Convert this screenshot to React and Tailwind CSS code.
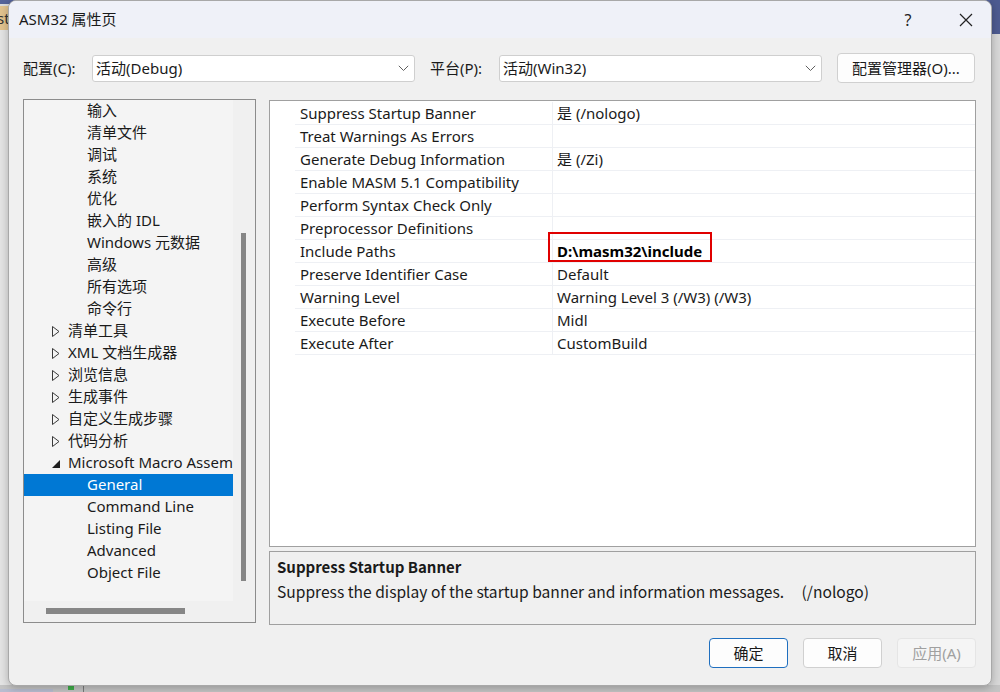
import React from "react";

const treeRows = [
  { t: "输入", k: "c" },
  { t: "清单文件", k: "c" },
  { t: "调试", k: "c" },
  { t: "系统", k: "c" },
  { t: "优化", k: "c" },
  { t: "嵌入的 IDL", k: "c" },
  { t: "Windows 元数据", k: "c" },
  { t: "高级", k: "c" },
  { t: "所有选项", k: "c" },
  { t: "命令行", k: "c" },
  { t: "清单工具", k: "p" },
  { t: "XML 文档生成器", k: "p" },
  { t: "浏览信息", k: "p" },
  { t: "生成事件", k: "p" },
  { t: "自定义生成步骤", k: "p" },
  { t: "代码分析", k: "p" },
  { t: "Microsoft Macro Assembler", k: "e" },
  { t: "General", k: "c", sel: true },
  { t: "Command Line", k: "c" },
  { t: "Listing File", k: "c" },
  { t: "Advanced", k: "c" },
  { t: "Object File", k: "c" },
];

const props = [
  ["Suppress Startup Banner", "是 (/nologo)"],
  ["Treat Warnings As Errors", ""],
  ["Generate Debug Information", "是 (/Zi)"],
  ["Enable MASM 5.1 Compatibility", ""],
  ["Perform Syntax Check Only", ""],
  ["Preprocessor Definitions", ""],
  ["Include Paths", "D:\\masm32\\include", true],
  ["Preserve Identifier Case", "Default"],
  ["Warning Level", "Warning Level 3 (/W3) (/W3)"],
  ["Execute Before", "Midl"],
  ["Execute After", "CustomBuild"],
];

function Chevron() {
  return (
    <svg width="11" height="7" viewBox="0 0 11 7" className="shrink-0">
      <path d="M0.8 0.8 L5.5 5.5 L10.2 0.8" fill="none" stroke="#606060" strokeWidth="1" />
    </svg>
  );
}

function Select({ value, w }) {
  return (
    <div className={`flex items-center justify-between h-[27px] bg-white border border-[#cfcfcf] rounded-[3px] pl-[3px] pr-[5px] ${w}`}>
      <span>{value}</span>
      <Chevron />
    </div>
  );
}

function TreeRow({ r }) {
  return (
    <div
      className={`relative h-[22px] flex items-center whitespace-nowrap ${r.sel ? "bg-[#0078d4] text-white" : "text-[#1a1a1a]"}`}
    >
      {r.k === "p" && (
        <svg width="8" height="11" viewBox="0 0 8 11" className="absolute left-[28px] top-[6px]">
          <path d="M0.5 0.5 L7 5.5 L0.5 10.5 Z" fill="none" stroke="#3a3a3a" strokeWidth="1" />
        </svg>
      )}
      {r.k === "e" && (
        <svg width="8" height="8" viewBox="0 0 8 8" className="absolute left-[28px] top-[8px]">
          <path d="M8 0 L8 8 L0 8 Z" fill="#1e1e1e" />
        </svg>
      )}
      <span className={`-mt-[1px] ${r.k === "c" ? "pl-[63px]" : "pl-[44px]"}`}>{r.t}</span>
    </div>
  );
}

export default function App() {
  return (
    <div className="relative w-[1000px] h-[692px] overflow-hidden bg-[#dcdcdc] font-['Noto_Sans','Noto_Sans_CJK_SC',sans-serif] text-[15px] text-[#1a1a1a]">
      {/* background desktop bits */}
      <div className="absolute left-0 top-0 w-[1000px] h-[4px] bg-[#56649a]" />
      <div className="absolute left-0 top-[6px] w-[10px] h-[24px] bg-[#e2c38e] overflow-hidden">
        <span className="absolute left-[-3px] top-0 text-[15px] leading-[24px] text-[#333]">st</span>
      </div>
      <div className="absolute left-0 top-[30px] w-[10px] h-[660px] bg-[#e4e4e4]" />
      <div className="absolute right-0 top-0 w-[10px] h-[34px] bg-[#4d5b91]" />
      <div className="absolute right-0 top-[34px] w-[10px] h-[660px] bg-[#d8d8d8]" />
      <div className="absolute left-0 top-[685px] w-[1000px] h-[7px] bg-[#c4c4c4]" />
      <div className="absolute left-0 top-[689px] w-[53px] h-[3px] bg-[#b8bdd0]" />
      <div className="absolute left-[68px] top-[683px] w-[6px] h-[7px] bg-[#3fae49]" />
      <div className="absolute left-[83px] top-[684px] w-[1px] h-[8px] bg-[#7a7a7a]" />

      {/* dialog */}
      <div className="absolute left-[8px] top-0 w-[984px] h-[686px] rounded-[8px] border border-[#a8a8a8] bg-[#f0f0f0] overflow-hidden flex flex-col shadow-[0_2px_8px_rgba(0,0,0,0.25)]">
        {/* title bar */}
        <div className="h-[37px] bg-[#eff1f8] flex items-center pl-[10px] shrink-0">
          <span className="text-[15px] text-[#1a1a1a]">ASM32 属性页</span>
          <div className="ml-auto flex items-center">
            <span className="w-[46px] text-center text-[16px] text-[#222] mr-[12px]">?</span>
            <div className="w-[46px] flex justify-center mr-[2px]">
              <svg width="14" height="14" viewBox="0 0 14 14">
                <path d="M1 1 L13 13 M13 1 L1 13" stroke="#222" strokeWidth="1.2" fill="none" />
              </svg>
            </div>
          </div>
        </div>

        {/* body */}
        <div className="flex-1 flex flex-col pl-[14px] pr-[15px]">
          {/* config row */}
          <div className="flex items-center mt-[15px] h-[30px]">
            <span className="w-[69px]">配置(C):</span>
            <Select value="活动(Debug)" w="w-[323px]" />
            <span className="ml-[15px] w-[69px]">平台(P):</span>
            <Select value="活动(Win32)" w="w-[323px]" />
            <div className="ml-[15px] w-[138px] h-[30px] flex items-center justify-center bg-[#fdfdfd] border border-[#d0d0d0] rounded-[4px]">
              配置管理器(O)...
            </div>
          </div>

          {/* main */}
          <div className="flex mt-[16px] gap-[13px]">
            {/* tree */}
            <div className="w-[233px] h-[524px] border border-[#8c8c8c] bg-[#f0f0f0] flex flex-col shrink-0">
              <div className="flex h-[501px]">
                <div className="w-[209px] bg-[#f4f4f4] overflow-hidden">
                  {treeRows.map((r, i) => (
                    <TreeRow key={i} r={r} />
                  ))}
                </div>
                <div className="flex-1 relative">
                  <div className="absolute left-[8px] top-[133px] w-[5px] h-[348px] bg-[#868686]" />
                </div>
              </div>
              <div className="flex-1 relative">
                <div className="absolute left-[22px] top-[7px] w-[139px] h-[6px] bg-[#868686]" />
              </div>
            </div>

            {/* right */}
            <div className="flex-1 flex flex-col">
              <div className="h-[447px] mt-[1px] border border-[#a0a0a0] bg-white pt-[1px]">
                {props.map(([n, v, hl], i) => (
                  <div key={i} className="flex h-[23px]">
                    <div className="w-[25px] shrink-0" />
                    <div className="w-[258px] shrink-0 border-b border-r border-[#eef0f4] pl-[5px] flex items-center whitespace-nowrap">{n}</div>
                    <div className="flex-1 border-b border-[#eef0f4] pl-[4px] flex items-center whitespace-nowrap relative">
                      {hl ? (
                        <span className="font-bold text-black relative">
                          {v}
                          <span className="absolute left-[-9px] top-[-8px] w-[164px] h-[30px] border-2 border-[#e00000]" />
                        </span>
                      ) : (
                        v
                      )}
                    </div>
                  </div>
                ))}
              </div>
              <div className="h-[74px] mt-[4px] border border-[#a0a0a0] bg-[#f0f0f0] px-[7px] pt-[3px] font-['Noto_Sans_CJK_SC','Noto_Sans',sans-serif]">
                <div className="font-bold h-[24px] leading-[24px]">Suppress Startup Banner</div>
                <div className="h-[24px] leading-[24px] whitespace-pre text-[15.6px]">Suppress the display of the startup banner and information messages.     (/nologo)</div>
              </div>
            </div>
          </div>

          {/* buttons */}
          <div className="flex justify-end gap-[15px] mt-[13px]">
            <div className="w-[79px] h-[30px] flex items-center justify-center bg-[#fdfdfd] border border-[#1f6fbf] rounded-[4px]">确定</div>
            <div className="w-[79px] h-[30px] flex items-center justify-center bg-[#fdfdfd] border border-[#d0d0d0] rounded-[4px]">取消</div>
            <div className="w-[79px] h-[30px] flex items-center justify-center bg-[#f5f5f5] border border-[#e5e5e5] rounded-[4px] text-[#a0a0a0]">应用(A)</div>
          </div>
        </div>
      </div>
    </div>
  );
}
